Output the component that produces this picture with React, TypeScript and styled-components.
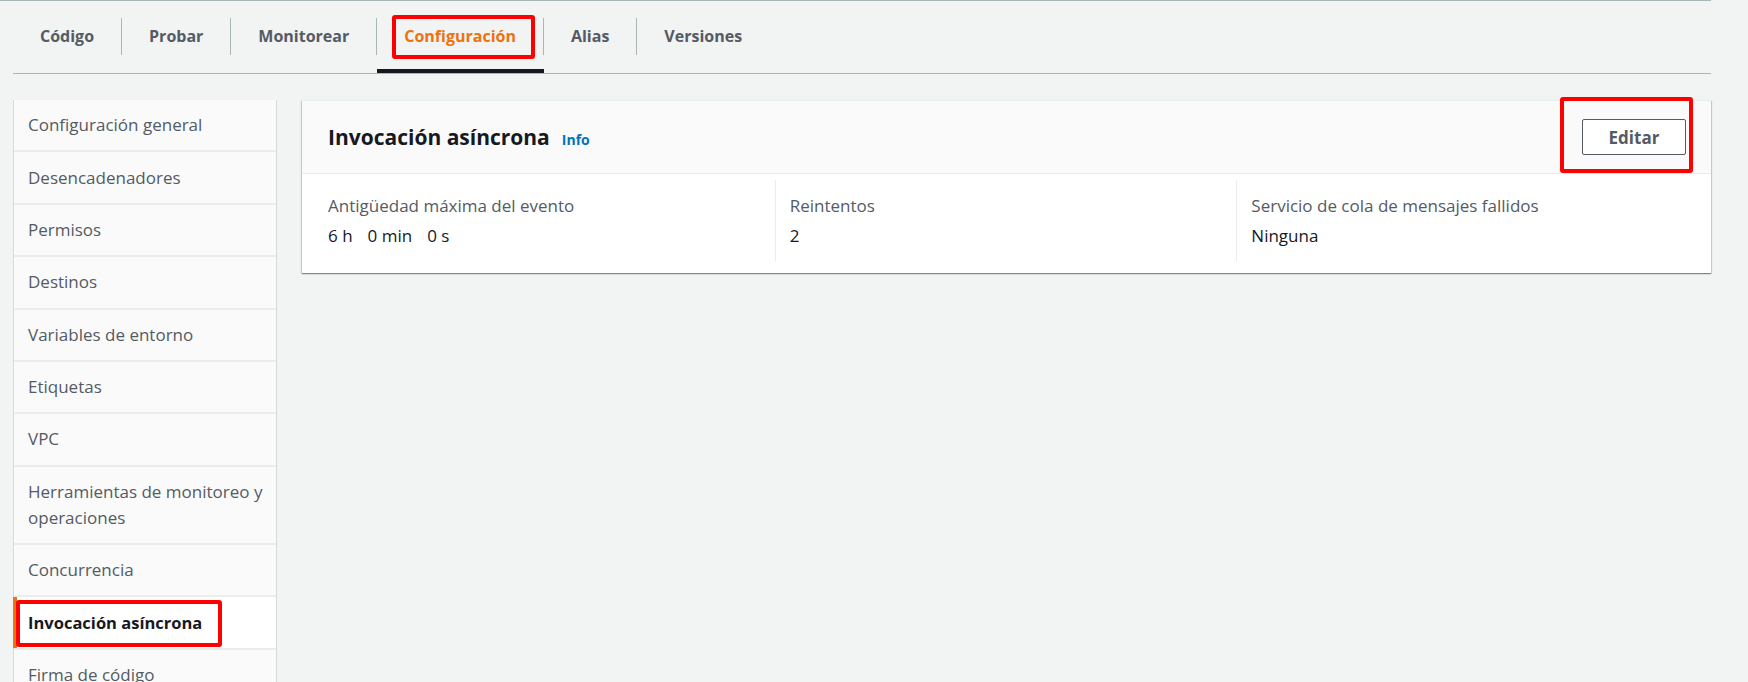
import React from "react"
import styled, { createGlobalStyle, css } from "styled-components"

const GlobalStyle = createGlobalStyle`
  body {
    margin: 0;
    background: #f2f3f3;
    font-family: "Open Sans", "Noto Sans", sans-serif;
    color: #16191f;
  }
`

const Page = styled.div`
  width: 1711px;
  border-top: 1px solid #aab7b8;
`

const TabBar = styled.div`
  display: flex;
  margin-left: 13px;
  border-bottom: 1px solid #aab7b8;
`

const Tab = styled.div<{ $active?: boolean }>`
  position: relative;
  height: 72px;
  box-sizing: border-box;
  padding-top: 17px;
  ${(p) =>
    p.$active &&
    css`
      &::after {
        content: "";
        position: absolute;
        left: 0;
        right: 0;
        bottom: 0;
        height: 4px;
        background: #16191f;
      }
    `}
`

const TabLabel = styled.div<{ $active?: boolean; $last?: boolean }>`
  padding: 0 27px;
  line-height: 37px;
  font-size: 16px;
  font-weight: 700;
  color: ${(p) => (p.$active ? "#ec7211" : "#545b64")};
  border-right: ${(p) => (p.$last ? "none" : "1px solid #aab7b8")};
`

// red annotation boxes drawn on top of the screenshot
const Marked = styled.span<{ $t: number; $r: number; $b: number; $l: number }>`
  position: relative;
  display: inline-block;
  vertical-align: top;
  &::after {
    content: "";
    position: absolute;
    top: ${(p) => -p.$t}px;
    right: ${(p) => -p.$r}px;
    bottom: ${(p) => -p.$b}px;
    left: ${(p) => -p.$l}px;
    border: 4px solid #ff0000;
    border-radius: 3px;
    pointer-events: none;
  }
`

const Body = styled.div`
  display: flex;
  align-items: flex-start;
  gap: 25px;
  margin: 26px 0 0 13px;
`

const Nav = styled.nav`
  width: 264px;
  flex-shrink: 0;
  box-sizing: border-box;
  border-left: 1px solid #d5dbdb;
  border-right: 1px solid #d5dbdb;
  background: #fafafa;
`

const NavItem = styled.div<{ $active?: boolean }>`
  position: relative;
  padding: 12.2px 6px 12.2px 14px;
  line-height: 26px;
  font-size: ${(p) => (p.$active ? "16.5px" : "17px")};
  color: ${(p) => (p.$active ? "#16191f" : "#545b64")};
  font-weight: ${(p) => (p.$active ? 700 : 400)};
  background: ${(p) => (p.$active ? "#ffffff" : "#fafafa")};
  border-bottom: 2px solid #eaeded;
  ${(p) =>
    p.$active &&
    css`
      &::before {
        content: "";
        position: absolute;
        left: -1px;
        top: 0;
        bottom: 0;
        width: 4px;
        background: #ec7211;
      }
    `}
`

const Panel = styled.section`
  flex: 1;
  background: #ffffff;
  box-shadow: 0 1px 1px 0 rgba(0, 28, 36, 0.3), 1px 1px 1px 0 rgba(0, 28, 36, 0.15),
    -1px 1px 1px 0 rgba(0, 28, 36, 0.15);
  border-top: 1px solid #eaeded;
`

const PanelHeader = styled.header`
  display: flex;
  align-items: center;
  justify-content: space-between;
  height: 72px;
  padding: 0 25px 0 26px;
  background: #fafafa;
  border-bottom: 1px solid #eaeded;
`

const TitleRow = styled.div`
  display: flex;
  align-items: baseline;
  gap: 12px;
`

const Title = styled.h2`
  margin: 0;
  font-size: 21px;
  font-weight: 700;
  color: #16191f;
`

const InfoLink = styled.a`
  font-size: 14px;
  font-weight: 700;
  color: #0073bb;
  text-decoration: none;
`

const EditButton = styled.button`
  width: 104px;
  height: 36px;
  background: #ffffff;
  border: 1px solid #545b64;
  border-radius: 2px;
  font-family: inherit;
  font-size: 17px;
  font-weight: 700;
  color: #545b64;
`

const PanelContent = styled.div`
  display: grid;
  grid-template-columns: repeat(3, 1fr);
  padding: 6px 13px 12px 11px;
`

const Column = styled.div<{ $first?: boolean }>`
  padding: 15px 14px 14px;
  border-left: ${(p) => (p.$first ? "1px solid transparent" : "1px solid #eaeded")};
`

const Label = styled.div`
  font-size: 17px;
  line-height: 22px;
  color: #545b64;
  margin-bottom: 8px;
`

const Value = styled.div`
  font-size: 17px;
  line-height: 22px;
  color: #16191f;
`

const Unit = styled.span`
  margin-right: 15px;
`

const tabs = ["Código", "Probar", "Monitorear", "Configuración", "Alias", "Versiones"]

const navItems = [
  "Configuración general",
  "Desencadenadores",
  "Permisos",
  "Destinos",
  "Variables de entorno",
  "Etiquetas",
  "VPC",
  "Herramientas de monitoreo y operaciones",
  "Concurrencia",
  "Invocación asíncrona",
  "Firma de código",
]

const App = () => {
  return (
    <Page>
      <GlobalStyle />
      <TabBar>
        {tabs.map((t, i) => {
          const active = t === "Configuración"
          return (
            <Tab key={t} $active={active}>
              <TabLabel $active={active} $last={i === tabs.length - 1}>
                {active ? (
                  <Marked $t={3} $r={19} $b={4} $l={12}>
                    {t}
                  </Marked>
                ) : (
                  t
                )}
              </TabLabel>
            </Tab>
          )
        })}
      </TabBar>

      <Body>
        <Nav>
          {navItems.map((n) => {
            const active = n === "Invocación asíncrona"
            return (
              <NavItem key={n} $active={active}>
                {active ? (
                  <Marked $t={10} $r={20} $b={11} $l={12}>
                    {n}
                  </Marked>
                ) : (
                  n
                )}
              </NavItem>
            )
          })}
        </Nav>

        <Panel>
          <PanelHeader>
            <TitleRow>
              <Title>Invocación asíncrona</Title>
              <InfoLink href="#">Info</InfoLink>
            </TitleRow>
            <Marked $t={22} $r={7} $b={18} $l={22}>
              <EditButton>Editar</EditButton>
            </Marked>
          </PanelHeader>
          <PanelContent>
            <Column $first>
              <Label>Antigüedad máxima del evento</Label>
              <Value>
                <Unit>6 h</Unit>
                <Unit>0 min</Unit>
                <span>0 s</span>
              </Value>
            </Column>
            <Column>
              <Label>Reintentos</Label>
              <Value>2</Value>
            </Column>
            <Column>
              <Label>Servicio de cola de mensajes fallidos</Label>
              <Value>Ninguna</Value>
            </Column>
          </PanelContent>
        </Panel>
      </Body>
    </Page>
  )
}

export default App
